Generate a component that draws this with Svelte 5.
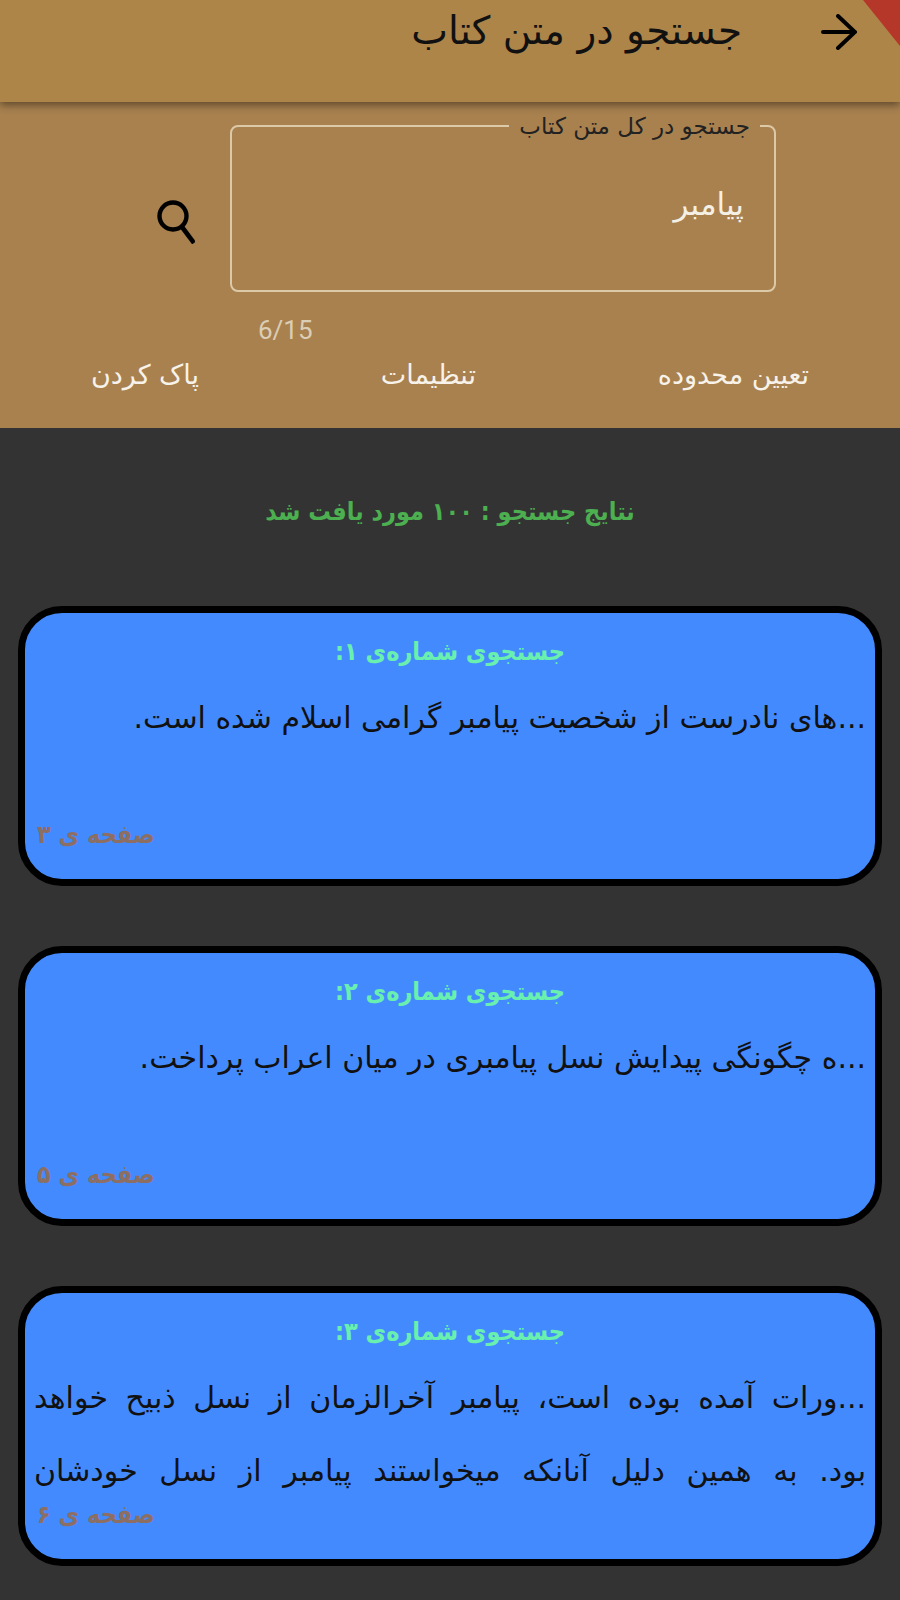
<script>
  let results = [
    { n: '۱', lines: ['...های نادرست از شخصیت پیامبر گرامی اسلام شده است.'], page: '۳' },
    { n: '۲', lines: ['...ه چگونگی پیدایش نسل پیامبری در میان اعراب پرداخت.'], page: '۵' },
    {
      n: '۳',
      lines: [
        '...ورات آمده بوده است، پیامبر آخرالزمان از نسل ذبیح خواهد',
        'بود. به همین دلیل آنانکه میخواستند پیامبر از نسل خودشان'
      ],
      page: '۶'
    }
  ]
</script>

<div class="page" dir="rtl">
  <header class="appbar">
    <svg class="back" viewBox="0 0 36 36" width="36" height="36">
      <path d="M2 18H34M17 2L34 18L17 34" fill="none" stroke="#000" stroke-width="4" stroke-linecap="round" />
    </svg>
    <h1>جستجو در متن کتاب</h1>
    <span class="banner"></span>
  </header>

  <section class="form">
    <div class="search-row">
      <fieldset class="field">
        <legend>جستجو در کل متن کتاب</legend>
        <div class="value">پیامبر</div>
      </fieldset>
      <svg class="search" viewBox="0 0 38 44" width="38" height="44">
        <ellipse cx="16" cy="16" rx="13.5" ry="13.5" fill="none" stroke="#000" stroke-width="4.4" />
        <path d="M25 27L37 43" fill="none" stroke="#000" stroke-width="4.6" />
      </svg>
    </div>
    <div class="counter" dir="ltr">6/15</div>
    <div class="actions">
      <span>تعیین محدوده</span>
      <span>تنظیمات</span>
      <span>پاک کردن</span>
    </div>
  </section>

  <main class="results">
    <h2>نتایج جستجو : ۱۰۰ مورد یافت شد</h2>
    {#each results as r}
      <article class="card">
        <h3>جستجوی شماره‌ی {r.n}:</h3>
        <div class="body" class:fill={r.lines.length > 1}>
          {#each r.lines as line}
            <p>{line}</p>
          {/each}
        </div>
        <div class="pg">صفحه ی {r.page}</div>
      </article>
    {/each}
  </main>
</div>

<style>
  :global(body) {
    margin: 0;
    background: #333333;
  }

  .page {
    width: 900px;
    height: 1600px;
    overflow: hidden;
    background: #333333;
    font-family: "DejaVu Sans", sans-serif;
    display: flex;
    flex-direction: column;
  }

  .appbar {
    position: relative;
    z-index: 1;
    height: 102px;
    flex: none;
    box-sizing: border-box;
    background: #ad8549;
    box-shadow: 0 3px 8px rgba(0, 0, 0, 0.45);
    display: flex;
    align-items: flex-start;
    padding: 14px 43px 0 0;
    overflow: hidden;
  }

  .back {
    flex: none;
  }

  .appbar h1 {
    margin: -6px 79px 0 0;
    font-size: 39px;
    line-height: 46px;
    font-weight: 400;
    color: #111;
  }

  .banner {
    position: absolute;
    top: 0;
    right: 0;
    width: 0;
    height: 0;
    border-top: 46px solid #b5372a;
    border-left: 37px solid transparent;
  }

  .form {
    height: 326px;
    flex: none;
    box-sizing: border-box;
    background: #a8814f;
    padding: 12px 0 0;
  }

  .search-row {
    display: flex;
    align-items: center;
    padding-right: 124px;
    gap: 35px;
  }

  .field {
    width: 546px;
    height: 178px;
    box-sizing: border-box;
    margin: 0;
    padding: 0 30px;
    border: 2px solid #dcc9a8;
    border-radius: 8px;
    min-width: 0;
  }

  .field legend {
    padding: 0 10px;
    margin-right: -16px;
    font-size: 23px;
    line-height: 24px;
    color: #222;
  }

  .value {
    margin-top: 46px;
    font-size: 31px;
    line-height: 40px;
    color: #f5f0e6;
  }

  .search {
    flex: none;
    margin-top: 38px;
  }

  .counter {
    margin: 22px 0 0 258px;
    font-family: Roboto, sans-serif;
    font-size: 26px;
    line-height: 32px;
    color: #dccdb6;
  }

  .actions {
    display: flex;
    justify-content: space-around;
    margin-top: 9px;
    font-size: 27px;
    line-height: 40px;
    color: #f7f2ea;
  }

  .results {
    flex: 1;
    display: flex;
    flex-direction: column;
    padding: 0 18px;
  }

  .results h2 {
    margin: 64px 0 0;
    height: 114px;
    text-align: center;
    font-size: 25px;
    line-height: 40px;
    font-weight: 700;
    font-stretch: condensed;
    color: #4caf50;
  }

  .card {
    flex: none;
    position: relative;
    box-sizing: border-box;
    height: 280px;
    margin-bottom: 60px;
    padding: 19px 9px 0;
    background: #448aff;
    border: 7px solid #000;
    border-radius: 44px;
  }

  .card h3 {
    margin: 0;
    text-align: center;
    font-size: 25px;
    line-height: 40px;
    font-weight: 700;
    font-stretch: condensed;
    color: #69f0ae;
  }

  .body {
    margin-top: 9px;
    font-size: 30px;
    line-height: 73px;
    color: #111;
  }

  .body p {
    margin: 0;
  }

  .body.fill p {
    text-align: justify;
    text-align-last: justify;
  }

  .pg {
    position: absolute;
    left: 12px;
    bottom: 26px;
    font-size: 25px;
    line-height: 36px;
    font-weight: 700;
    font-stretch: condensed;
    color: #8d6e63;
  }
</style>
